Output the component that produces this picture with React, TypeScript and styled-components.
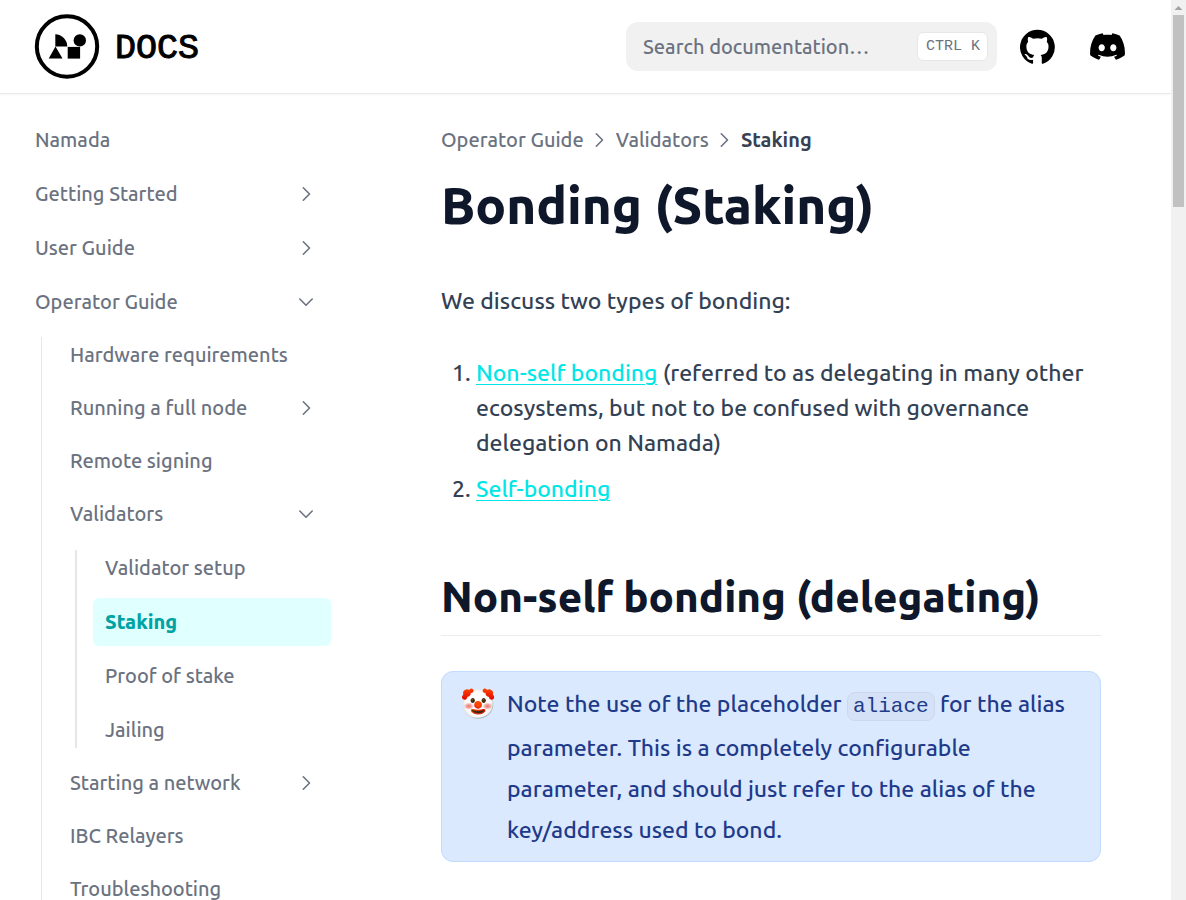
import React from 'react';
import styled, { createGlobalStyle, css } from 'styled-components';

const sans = `Ubuntu, "Noto Sans", sans-serif`;
const mono = `"Liberation Mono", monospace`;

const GlobalStyle = createGlobalStyle`
  *, *::before, *::after { box-sizing: border-box; }
  body { margin: 0; background: #fff; color: #334155; font-family: ${sans}; font-weight: 500; }
  ul, ol, p, h1, h2 { margin: 0; padding: 0; }
  ul { list-style: none; }
`;

const Window = styled.div`
  display: flex;
  height: 100vh;
  overflow: hidden;
`;

const Page = styled.div`
  flex: 1;
  min-width: 0;
`;

const Navbar = styled.header`
  display: flex;
  align-items: center;
  height: 93px;
  padding: 0 46px 0 34px;
  box-shadow: 0 1px 0 #e8e8e8, 0 2px 2px rgba(0, 0, 0, 0.03);
`;

const Brand = styled.a`
  display: flex;
  align-items: center;
  gap: 15px;
  margin-right: auto;
  color: #000;
  text-decoration: none;
`;

const Wordmark = styled.span`
  padding-top: 4px;
  font: 400 35px/48px ${mono};
  -webkit-text-stroke: 1px #000;
`;

const SearchBox = styled.label`
  display: flex;
  align-items: center;
  width: 371px;
  height: 49px;
  padding: 0 9px 0 17px;
  border-radius: 12px;
  background: #f1f1f1;
`;

const SearchInput = styled.input`
  flex: 1;
  min-width: 0;
  padding: 0;
  border: 0;
  outline: 0;
  background: transparent;
  font: 500 20px/28px ${sans};
  color: #6b7280;
  &::placeholder { color: #6b7280; opacity: 1; }
`;

const Shortcut = styled.kbd`
  height: 29px;
  padding: 0 7px 0 8px;
  border: 1px solid #e5e7eb;
  border-radius: 6px;
  background: #fff;
  color: #6b7280;
  font: 400 15px/28px ${mono};
  white-space: pre;
`;

const IconLink = styled.a<{ $gap: number }>`
  display: flex;
  margin-left: ${p => p.$gap}px;
  color: #000;
`;

const Columns = styled.div`
  display: flex;
  align-items: flex-start;
`;

const Sidebar = styled.nav`
  flex: none;
  width: 371px;
  padding: 23px 40px 24px 23px;
`;

const List = styled.ul<{ $gap: number }>`
  display: flex;
  flex: 1;
  flex-direction: column;
  gap: ${p => p.$gap}px;
`;

const Nested = styled.div<{ $offset: number; $top: number }>`
  display: flex;
  margin-top: ${p => p.$top}px;
  padding-left: ${p => p.$offset}px;
`;

const Rule = styled.div<{ $width: number }>`
  width: ${p => p.$width}px;
  margin: 6px 16px 6px 0;
  background: #e5e7eb;
`;

const item = css`
  display: flex;
  align-items: center;
  justify-content: space-between;
  width: 100%;
  height: 48px;
  padding: 0 12px;
  border: 0;
  border-radius: 6px;
  background: transparent;
  color: #6b7280;
  font: 500 20px/28px ${sans};
  text-align: left;
  text-decoration: none;
`;

const ItemLink = styled.a<{ $active?: boolean }>`
  ${item}
  ${p => p.$active && css`
    background: #e0ffff;
    color: #00a3a3;
    font-weight: 800;
  `}
`;

const ItemButton = styled.button`
  ${item}
  cursor: pointer;
`;

const Article = styled.main`
  flex: 1;
  min-width: 0;
  padding: 29px 70px 40px;
`;

const Breadcrumb = styled.nav`
  display: flex;
  align-items: center;
  gap: 4px;
  font-size: 20px;
  line-height: 35px;
  color: #6b7280;
`;

const Crumb = styled.a`
  color: inherit;
  text-decoration: none;
`;

const Current = styled.span`
  color: #374151;
  font-weight: 600;
`;

const Title = styled.h1`
  margin-top: 18px;
  font-size: 51px;
  font-weight: 800;
  line-height: 60px;
  color: #0f172a;
`;

const Paragraph = styled.p`
  margin-top: 46px;
  font-size: 23px;
  line-height: 40px;
`;

const Steps = styled.ol`
  margin-top: 34px;
  padding-left: 35px;
  font-size: 23px;
  line-height: 35px;
`;

const Step = styled.li`
  & + & { margin-top: 11px; }
`;

const TextLink = styled.a`
  color: #00e6e6;
  text-decoration: underline;
  text-decoration-thickness: 1px;
  text-underline-position: from-font;
`;

const Subtitle = styled.h2`
  margin-top: 63px;
  padding-bottom: 10px;
  border-bottom: 1px solid #ececec;
  font-size: 42px;
  font-weight: 800;
  line-height: 56px;
  color: #0f172a;
`;

const Callout = styled.aside`
  display: flex;
  margin-top: 35px;
  padding: 11px 22px 11px 18px;
  border: 1px solid #bfdbfe;
  border-radius: 12px;
  background: #dbe9fe;
  color: #1e3a8a;
`;

const CalloutIcon = styled.span`
  flex: none;
  width: 47px;
  font-size: 29px;
  line-height: 40px;
`;

const CalloutText = styled.p`
  min-width: 0;
  font-size: 23px;
  line-height: 41px;
`;

const Code = styled.code`
  padding: 2px 5px;
  border: 1px solid rgba(0, 0, 0, 0.04);
  border-radius: 8px;
  background: rgba(0, 0, 0, 0.03);
  font-family: ${mono};
  font-size: 21px;
  font-weight: 400;
`;

const Scrollbar = styled.div`
  display: flex;
  flex: none;
  flex-direction: column;
  align-items: center;
  width: 15px;
  background: #f1f1f1;
`;

const Thumb = styled.div`
  width: 11px;
  height: 192px;
  background: #c1c1c1;
`;

function Chevron({ open = false }: { open?: boolean }) {
  return (
    <svg width="24" height="24" viewBox="0 0 24 24" fill="none" stroke="currentColor"
      strokeWidth="1.6" strokeLinecap="round" strokeLinejoin="round" aria-hidden="true">
      <path d={open ? 'M17.2 9l-6.2 6.2L4.8 9' : 'M8.3 5.8l6.2 6.2-6.2 6.2'} />
    </svg>
  );
}

function Logo() {
  return (
    <svg width="66" height="66" viewBox="0 0 66 66" aria-hidden="true">
      <circle cx="33" cy="32.5" r="30.2" fill="none" stroke="#000" strokeWidth="4" />
      <path d="M21.3 20.2a12.3 12.3 0 0 1 12 12.3h-12z" />
      <circle cx="45.8" cy="26.4" r="6.2" />
      <path d="M21.5 32.4l7 12H14.7z" />
      <path d="M33.7 32.9h12.4v11.7H33.7z" />
    </svg>
  );
}

function GithubIcon() {
  return (
    <svg width="35" height="36" viewBox="2 2.2 20.1 19.8" fill="currentColor" aria-hidden="true">
      <path d="M12 2.247a10 10 0 0 0-3.162 19.487c.5.088.687-.212.687-.475 0-.237-.012-1.025-.012-1.862-2.513.462-3.163-.613-3.363-1.175a3.636 3.636 0 0 0-1.025-1.413c-.35-.187-.85-.65-.013-.662a2.001 2.001 0 0 1 1.538 1.025 2.137 2.137 0 0 0 2.912.825 2.104 2.104 0 0 1 .638-1.338c-2.225-.25-4.55-1.112-4.55-4.937a3.892 3.892 0 0 1 1.025-2.688 3.594 3.594 0 0 1 .1-2.65s.837-.262 2.75 1.025a9.427 9.427 0 0 1 5 0c1.912-1.3 2.75-1.025 2.75-1.025a3.593 3.593 0 0 1 .1 2.65 3.869 3.869 0 0 1 1.025 2.688c0 3.837-2.338 4.687-4.563 4.937a2.368 2.368 0 0 1 .675 1.85c0 1.338-.012 2.413-.012 2.75 0 .263.187.575.687.475A10.005 10.005 0 0 0 12 2.247z" />
    </svg>
  );
}

function DiscordIcon() {
  return (
    <svg width="35" height="27" viewBox="0 0 71 55" fill="currentColor" aria-hidden="true">
      <path d="M60.1045 4.8978C55.5792 2.8214 50.7265 1.2916 45.6527 0.41542C45.5603 0.39851 45.468 0.440769 45.4204 0.525289C44.7963 1.6353 44.105 3.0834 43.6209 4.2216C38.1637 3.4046 32.7345 3.4046 27.3892 4.2216C26.905 3.0581 26.1886 1.6353 25.5617 0.525289C25.5141 0.443589 25.4218 0.40133 25.3294 0.41542C20.2584 1.2888 15.4057 2.8186 10.8776 4.8978C10.8384 4.9147 10.8048 4.9429 10.7825 4.9795C1.57795 18.7309 -0.943561 32.1443 0.293408 45.3914C0.299005 45.4562 0.335386 45.5182 0.385761 45.5576C6.45866 50.0174 12.3413 52.7249 18.1147 54.5195C18.2071 54.5477 18.305 54.5139 18.3638 54.4378C19.7295 52.5728 20.9469 50.6063 21.9907 48.5383C22.0523 48.4172 21.9935 48.2735 21.8676 48.2256C19.9366 47.4931 18.0979 46.6 16.3292 45.5858C16.1893 45.5041 16.1781 45.304 16.3068 45.2082C16.679 44.9293 17.0513 44.6391 17.4067 44.3461C17.471 44.2926 17.5606 44.2813 17.6362 44.3151C29.2558 49.6202 41.8354 49.6202 53.3179 44.3151C53.3935 44.2785 53.4831 44.2898 53.5502 44.3433C53.9057 44.6363 54.2779 44.9293 54.6529 45.2082C54.7816 45.304 54.7732 45.5041 54.6333 45.5858C52.8646 46.6197 51.0259 47.4931 49.0921 48.2228C48.9662 48.2707 48.9102 48.4172 48.9718 48.5383C50.038 50.6034 51.2554 52.5699 52.5959 54.435C52.6519 54.5139 52.7526 54.5477 52.845 54.5195C58.6464 52.7249 64.529 50.0174 70.6019 45.5576C70.6551 45.5182 70.6887 45.459 70.6943 45.3942C72.1747 30.0791 68.2147 16.7757 60.1968 4.9823C60.1772 4.9429 60.1437 4.9147 60.1045 4.8978ZM23.7259 37.3253C20.2276 37.3253 17.3451 34.1136 17.3451 30.1693C17.3451 26.225 20.1717 23.0133 23.7259 23.0133C27.308 23.0133 30.1626 26.2532 30.1066 30.1693C30.1066 34.1136 27.28 37.3253 23.7259 37.3253ZM47.3178 37.3253C43.8196 37.3253 40.9371 34.1136 40.9371 30.1693C40.9371 26.225 43.7636 23.0133 47.3178 23.0133C50.9 23.0133 53.7545 26.2532 53.6986 30.1693C53.6986 34.1136 50.9 37.3253 47.3178 37.3253Z" />
    </svg>
  );
}

function Folder({ label, open, children }: { label: string; open?: boolean; children?: React.ReactNode }) {
  return (
    <li>
      <ItemButton type="button" aria-expanded={!!open}>{label}<Chevron open={open} /></ItemButton>
      {children}
    </li>
  );
}

function Leaf({ label, active }: { label: string; active?: boolean }) {
  return <li><ItemLink href="#" $active={active} aria-current={active ? 'page' : undefined}>{label}</ItemLink></li>;
}

export default function App() {
  return (
    <>
      <GlobalStyle />
      <Window>
        <Page>
          <Navbar>
            <Brand href="#"><Logo /><Wordmark>DOCS</Wordmark></Brand>
            <SearchBox>
              <SearchInput type="search" placeholder="Search documentation…" aria-label="Search documentation" />
              <Shortcut>CTRL K</Shortcut>
            </SearchBox>
            <IconLink href="#" $gap={23} aria-label="GitHub"><GithubIcon /></IconLink>
            <IconLink href="#" $gap={35} aria-label="Discord"><DiscordIcon /></IconLink>
          </Navbar>
          <Columns>
            <Sidebar aria-label="Documentation">
              <List $gap={6}>
                <Leaf label="Namada" />
                <Folder label="Getting Started" />
                <Folder label="User Guide" />
                <Folder label="Operator Guide" open>
                  <Nested $offset={18} $top={5}>
                    <Rule $width={1} />
                    <List $gap={5}>
                      <Leaf label="Hardware requirements" />
                      <Folder label="Running a full node" />
                      <Leaf label="Remote signing" />
                      <Folder label="Validators" open>
                        <Nested $offset={17} $top={6}>
                          <Rule $width={2} />
                          <List $gap={6}>
                            <Leaf label="Validator setup" />
                            <Leaf label="Staking" active />
                            <Leaf label="Proof of stake" />
                            <Leaf label="Jailing" />
                          </List>
                        </Nested>
                      </Folder>
                      <Folder label="Starting a network" />
                      <Leaf label="IBC Relayers" />
                      <Leaf label="Troubleshooting" />
                    </List>
                  </Nested>
                </Folder>
              </List>
            </Sidebar>
            <Article>
              <Breadcrumb aria-label="Breadcrumb">
                <Crumb href="#">Operator Guide</Crumb>
                <Chevron />
                <Crumb href="#">Validators</Crumb>
                <Chevron />
                <Current aria-current="page">Staking</Current>
              </Breadcrumb>
              <Title>Bonding (Staking)</Title>
              <Paragraph>We discuss two types of bonding:</Paragraph>
              <Steps>
                <Step>
                  <TextLink href="#">Non-self bonding</TextLink> (referred to as delegating in many other
                  ecosystems, but not to be confused with governance delegation on Namada)
                </Step>
                <Step><TextLink href="#">Self-bonding</TextLink></Step>
              </Steps>
              <Subtitle>Non-self bonding (delegating)</Subtitle>
              <Callout>
                <CalloutIcon aria-hidden="true">🤡</CalloutIcon>
                <CalloutText>
                  Note the use of the placeholder <Code>aliace</Code> for the alias parameter. This is a
                  completely configurable parameter, and should just refer to the alias of the key/address
                  used to bond.
                </CalloutText>
              </Callout>
            </Article>
          </Columns>
        </Page>
        <Scrollbar aria-hidden="true">
          <svg width="15" height="15" viewBox="0 0 15 15"><path d="M3.5 10L7.5 6l4 4z" fill="#a3a3a3" /></svg>
          <Thumb />
        </Scrollbar>
      </Window>
    </>
  );
}
